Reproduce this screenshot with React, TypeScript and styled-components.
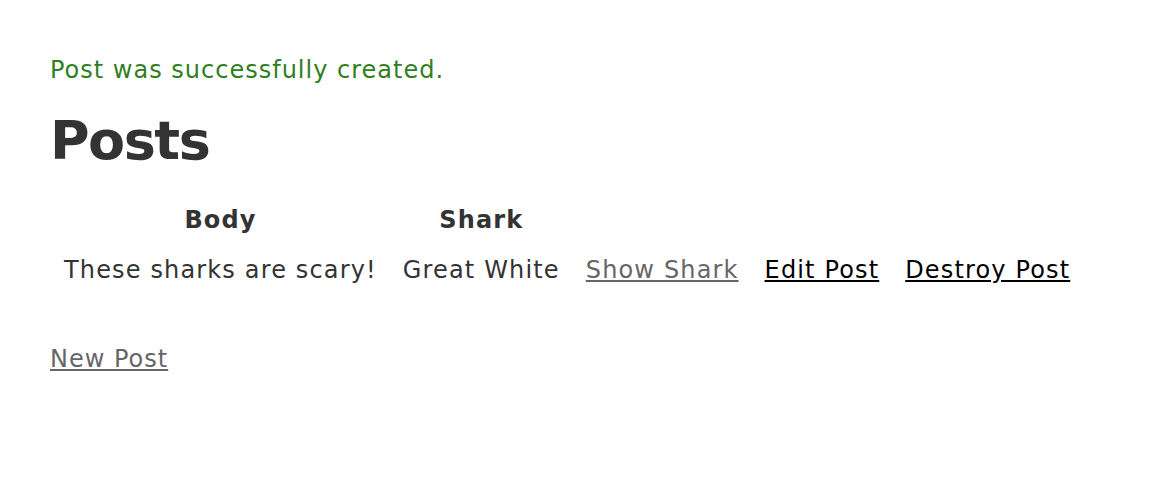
import React from "react";
import styled, { createGlobalStyle } from "styled-components";

const Global = createGlobalStyle`
  html, body { margin: 0; padding: 0; background: #fff; }
  body {
    color: #333;
    font-family: Verdana, "DejaVu Sans", sans-serif;
    font-size: 24px;
    letter-spacing: 1px;
    line-height: 30px;
  }
`;

const Page = styled.div`
  padding: 55px 50px 0 50px;
`;

const Notice = styled.p`
  margin: 0;
  color: #2f7f1f;
`;

const Title = styled.h1`
  margin: 16px 0 13px 0;
  font-size: 54px;
  letter-spacing: -1.5px;
  line-height: 80px;
  font-weight: bold;
`;

const Table = styled.table`
  border-collapse: separate;
  border-spacing: 2px;
`;

const Th = styled.th`
  padding: 9px 12px;
  font-weight: bold;
  text-align: center;
  letter-spacing: 1.1px;
`;

const Td = styled.td`
  padding: 9px 12px;
  letter-spacing: 1.15px;
`;

const Link = styled.a<{ $visited?: boolean }>`
  color: ${(p) => (p.$visited ? "#666" : "#000")};
  text-decoration: underline;
`;

const Footer = styled.div`
  margin-top: 48px;
`;

export default function App() {
  return (
    <>
      <Global />
      <Page>
        <Notice>Post was successfully created.</Notice>
        <Title>Posts</Title>
        <Table>
          <thead>
            <tr>
              <Th>Body</Th>
              <Th>Shark</Th>
              <Th colSpan={3}></Th>
            </tr>
          </thead>
          <tbody>
            <tr>
              <Td>These sharks are scary!</Td>
              <Td>Great White</Td>
              <Td><Link href="#" $visited>Show Shark</Link></Td>
              <Td><Link href="#">Edit Post</Link></Td>
              <Td><Link href="#">Destroy Post</Link></Td>
            </tr>
          </tbody>
        </Table>
        <Footer>
          <Link href="#" $visited>New Post</Link>
        </Footer>
      </Page>
    </>
  );
}
